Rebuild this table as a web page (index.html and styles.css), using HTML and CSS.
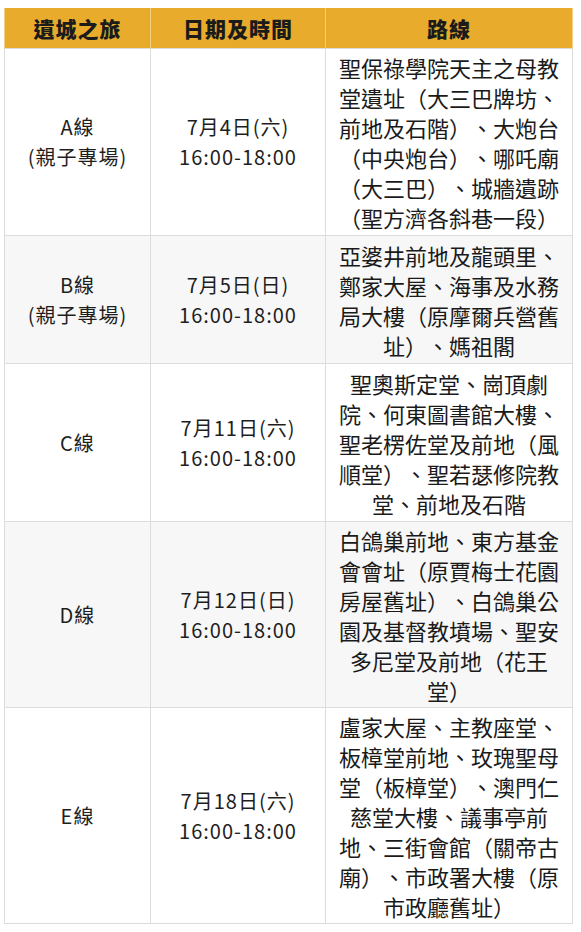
FILE: index.html
```html
<!DOCTYPE html>
<html lang="zh-Hant">
<head>
<meta charset="utf-8">
<title>遺城之旅</title>
<link rel="stylesheet" href="styles.css">
</head>
<body>
<table class="tour">
  <colgroup>
    <col class="c1"><col class="c2"><col class="c3">
  </colgroup>
  <thead>
    <tr><th>遺城之旅</th><th>日期及時間</th><th>路線</th></tr>
  </thead>
  <tbody>
    <tr class="r1">
      <td class="name">A線<br>(親子專場)</td>
      <td class="date">7月4日(六)<br>16:00-18:00</td>
      <td class="route">聖保祿學院天主之母教<br>堂遺址（大三巴牌坊、<br>前地及石階）、大炮台<br>（中央炮台）、哪吒廟<br>（大三巴）、城牆遺跡<br>（聖方濟各斜巷一段）</td>
    </tr>
    <tr class="r2">
      <td class="name">B線<br>(親子專場)</td>
      <td class="date">7月5日(日)<br>16:00-18:00</td>
      <td class="route">亞婆井前地及龍頭里、<br>鄭家大屋、海事及水務<br>局大樓（原摩爾兵營舊<br>址）、媽祖閣</td>
    </tr>
    <tr class="r3">
      <td class="name">C線</td>
      <td class="date">7月11日(六)<br>16:00-18:00</td>
      <td class="route">聖奧斯定堂、崗頂劇<br>院、何東圖書館大樓、<br>聖老楞佐堂及前地（風<br>順堂）、聖若瑟修院教<br>堂、前地及石階</td>
    </tr>
    <tr class="r4">
      <td class="name">D線</td>
      <td class="date">7月12日(日)<br>16:00-18:00</td>
      <td class="route">白鴿巢前地、東方基金<br>會會址（原賈梅士花園<br>房屋舊址）、白鴿巢公<br>園及基督教墳場、聖安<br>多尼堂及前地（花王<br>堂）</td>
    </tr>
    <tr class="r5">
      <td class="name">E線</td>
      <td class="date">7月18日(六)<br>16:00-18:00</td>
      <td class="route">盧家大屋、主教座堂、<br>板樟堂前地、玫瑰聖母<br>堂（板樟堂）、澳門仁<br>慈堂大樓、議事亭前<br>地、三街會館（關帝古<br>廟）、市政署大樓（原<br>市政廳舊址）</td>
    </tr>
  </tbody>
</table>
</body>
</html>
```

FILE: styles.css
```css
html, body {
  margin: 0;
  padding: 0;
  background: #ffffff;
}
body {
  padding: 8px 9px 0 4px;
  font-family: "Noto Sans CJK TC", "Noto Sans", sans-serif;
  color: #222222;
  text-spacing-trim: space-all;
  font-feature-settings: "halt" 0, "palt" 0;
}
.tour {
  width: 568px;
  border-collapse: collapse;
  table-layout: fixed;
}
.c1 { width: 146px; }
.c2 { width: 175px; }
.c3 { width: 247px; }
.tour th {
  background: #e8ab2b;
  height: 40px;
  padding: 0;
  font-size: 21px;
  font-weight: 900;
  color: #1b1b1b;
  border-left: 1px solid #f2cf7c;
  border-right: 1px solid #f2cf7c;
  letter-spacing: 1px;
}
.tour td {
  border: 1px solid #dcdcdc;
  text-align: center;
  vertical-align: middle;
  padding: 0;
}
.tour tbody tr:nth-child(even) td {
  background: #f7f7f7;
}
.name, .date {
  font-size: 20px;
  line-height: 30px;
  color: #1e1e1e;
  letter-spacing: 1px;
}
.route {
  font-size: 22px;
  line-height: 30px;
  white-space: nowrap;
  color: #1a1a1a;
}
.r1 td { height: 186px; }
.r2 td { height: 127px; }
.r3 td { height: 157px; }
.r4 td { height: 185px; }
.r5 td { height: 215px; }
```
